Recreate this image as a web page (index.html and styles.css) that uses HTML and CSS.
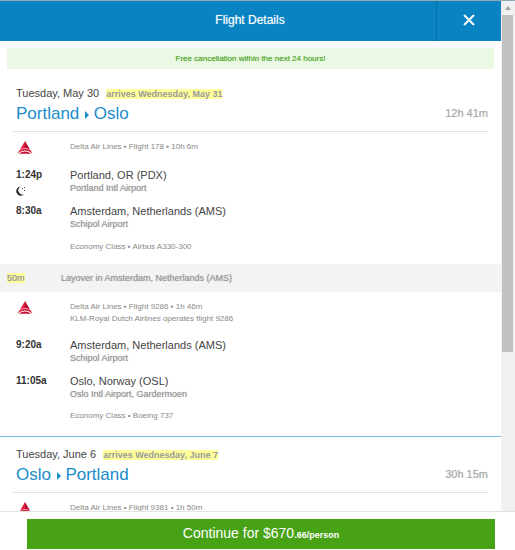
FILE: index.html
```html
<!DOCTYPE html>
<html lang="en">
<head>
<meta charset="utf-8">
<meta name="viewport" content="width=device-width, initial-scale=1">
<title>Flight Details</title>
<link rel="stylesheet" href="styles.css">
</head>
<body>
<svg class="defs" aria-hidden="true">
  <symbol id="delta" viewBox="0 0 16 13">
    <path fill="#e3203f" d="M8 0 3 8.600Q5.500 7 8 7z"/>
    <path fill="#b01030" d="M8 0l5 8.600Q10.500 7 8 7z"/>
    <path fill="#e3203f" d="M2.400 9.300Q8 5.800 13.600 9.300L15.500 12.600Q8 6.400.5 12.600z"/>
    <path fill="#c01535" d="M1.800 12.800Q8 8.200 14.200 12.800z"/>
  </symbol>
  <symbol id="arrow" viewBox="0 0 4 8">
    <path fill="currentColor" d="M0 0l4 4-4 4z"/>
  </symbol>
</svg>
<div class="dialog">
  <div class="viewport">
    <main class="content">
      <header class="header">
        <h1 class="title">Flight Details</h1>
        <button class="close" type="button" aria-label="Close">
          <svg width="12" height="12" viewBox="0 0 12 12"><path d="M1 1l10 10M11 1L1 11" fill="none" stroke="#fff" stroke-width="1.900"/></svg>
        </button>
      </header>
      <p class="notice">Free cancellation within the next 24 hours!</p>

      <section class="trip">
        <div class="trip-head">
          <div>
            <p class="date">Tuesday, May 30 <mark class="arrives">arrives Wednesday, May 31</mark></p>
            <h2 class="route">Portland <svg class="arrow"><use href="#arrow"/></svg> Oslo</h2>
          </div>
          <span class="duration">12h 41m</span>
        </div>
        <div class="segment first">
          <svg class="logo" role="img" aria-label="Delta"><use href="#delta"/></svg>
          <p class="info">Delta Air Lines ▪ Flight 178 ▪ 10h 6m</p>
          <div class="time">1:24p
            <svg class="moon" viewBox="0 0 10 10" aria-hidden="true"><path fill="#222" d="M4.800.5A4.600 4.600 0 1 0 8.200 8.300 4 4 0 0 1 4.800.5z"/><path fill="#444" d="M6 2h1v1H6zM8 1h1v1H8zM8 4h1v1H8z"/></svg>
          </div>
          <div class="stop"><p class="city">Portland, OR (PDX)</p><p class="airport">Portland Intl Airport</p></div>
          <div class="time">8:30a</div>
          <div class="stop"><p class="city">Amsterdam, Netherlands (AMS)</p><p class="airport">Schipol Airport</p></div>
          <p class="info cabin">Economy Class ▪ Airbus A330-300</p>
        </div>
        <div class="layover">
          <span><mark>50m</mark></span>
          <span>Layover in Amsterdam, Netherlands (AMS)</span>
        </div>
        <div class="segment last">
          <svg class="logo" role="img" aria-label="Delta"><use href="#delta"/></svg>
          <p class="info operated">Delta Air Lines ▪ Flight 9286 ▪ 1h 46m<br>KLM-Royal Dutch Airlines operates flight 9286</p>
          <div class="time">9:20a</div>
          <div class="stop"><p class="city">Amsterdam, Netherlands (AMS)</p><p class="airport">Schipol Airport</p></div>
          <div class="time">11:05a</div>
          <div class="stop"><p class="city">Oslo, Norway (OSL)</p><p class="airport">Oslo Intl Airport, Gardermoen</p></div>
          <p class="info cabin">Economy Class • Boeing 737</p>
        </div>
      </section>

      <section class="trip return">
        <div class="trip-head">
          <div>
            <p class="date">Tuesday, June 6 <mark class="arrives">arrives Wednesday, June 7</mark></p>
            <h2 class="route">Oslo <svg class="arrow"><use href="#arrow"/></svg> Portland</h2>
          </div>
          <span class="duration">30h 15m</span>
        </div>
        <div class="segment">
          <svg class="logo" role="img" aria-label="Delta"><use href="#delta"/></svg>
          <p class="info">Delta Air Lines • Flight 9381 • 1h 50m</p>
        </div>
      </section>
    </main>
    <div class="scrollbar" aria-hidden="true">
      <svg class="up" width="6" height="4" viewBox="0 0 6 4"><path fill="#a0a0a0" d="M3 0l3 4H0z"/></svg>
      <div class="track"><div class="thumb"></div></div>
    </div>
  </div>
  <footer class="footer">
    <button class="continue" type="button">Continue for $670<b>.66/person</b></button>
  </footer>
</div>
</body>
</html>
```

FILE: styles.css
```css
* { box-sizing: border-box; }

body, h1, h2, p { margin: 0; font-weight: 400; }

body {
  font-family: "Liberation Sans", Arial, sans-serif;
  font-size: 11px;
  line-height: 14px;
  color: #444;
  background: #fff;
}

button { border: 0; font-family: inherit; color: #fff; cursor: pointer; }

mark { background: #ffff99; color: inherit; }

.defs { position: absolute; width: 0; height: 0; }

.dialog {
  display: flex;
  flex-direction: column;
  height: 100vh;
  border-top: 1px solid #8fa9b5;
}

.viewport { display: flex; flex: 1; min-height: 0; }

.content { flex: 1; min-width: 0; overflow: hidden; }

.header { display: flex; height: 40px; background: #0a83c2; color: #fff; }

.title {
  flex: 1;
  padding-left: 64px;
  font-size: 12px;
  line-height: 38px;
  text-align: center;
  text-shadow: 0 0 1px #84c1e0;
}

.close {
  display: grid;
  place-items: center;
  width: 65px;
  padding: 0 0 3px;
  background: #0a83c2;
  border-left: 1px solid #0670a9;
}

.notice {
  margin: 7px 7px 0;
  background: #ebf8e4;
  color: #45a018;
  font-size: 8px;
  line-height: 21px;
  text-align: center;
  text-shadow: 0 0 1px #a5d38e;
}

.trip { padding-top: 17px; }

.return { padding-top: 10px; border-top: 1px solid #72bbe2; }

.trip-head {
  display: flex;
  justify-content: space-between;
  align-items: flex-end;
  margin: 0 13px;
  padding: 0 0 6px 3px;
  border-bottom: 1px solid #e2e2e2;
}

.arrives {
  margin-left: 4px;
  color: #999;
  font-size: 9px;
  font-weight: 700;
}

.route {
  margin-top: 2px;
  color: #1a8ccb;
  font-size: 17px;
  line-height: 22px;
}

.arrow { width: 4px; height: 8px; margin: 0 0 0 1px; }

.duration {
  padding-bottom: 5px;
  color: #aaa;
  text-shadow: 0 0 1px #ccc;
}

.segment {
  display: grid;
  grid-template-columns: 54px 1fr;
  row-gap: 10px;
  padding: 9px 16px 12px;
}

.first { padding-bottom: 11px; }

.last { padding-bottom: 14px; }

.logo { width: 16px; height: 13px; margin-left: 1px; }

.info { margin-bottom: 5px; color: #888; font-size: 8px; line-height: 12px; }

.operated { margin-bottom: 3px; }

.cabin { grid-column: 2; margin: 0; }

.first .cabin { margin-top: 1px; }

.time { color: #333; font-size: 10px; font-weight: 700; }

.moon { display: block; width: 10px; height: 10px; margin: 4px 0 -2px; }

.airport {
  color: #999;
  font-size: 9px;
  line-height: 12px;
  text-shadow: 0 0 1px #aaa;
}

.layover {
  display: grid;
  grid-template-columns: 54px 1fr;
  padding: 0 7px;
  background: #f3f3f3;
  color: #999;
  font-size: 9px;
  line-height: 28px;
  text-shadow: 0 0 1px #aaa;
}

.scrollbar {
  display: flex;
  flex-direction: column;
  width: 14px;
  background: #f1f1f1;
}

.up { margin: 5px 4px; }

.track { flex: 1; padding: 0 2px 0 1px; }

.thumb { height: 68%; background: #c1c1c1; }

.footer {
  display: flex;
  padding: 7px 20px 1px 27px;
  border-top: 1px solid #e2e2e2;
}

.continue {
  flex: 1;
  height: 30px;
  padding: 0;
  background: #48a216;
  font-size: 14px;
  line-height: 28px;
}

.continue b { font-size: 9px; }
```
